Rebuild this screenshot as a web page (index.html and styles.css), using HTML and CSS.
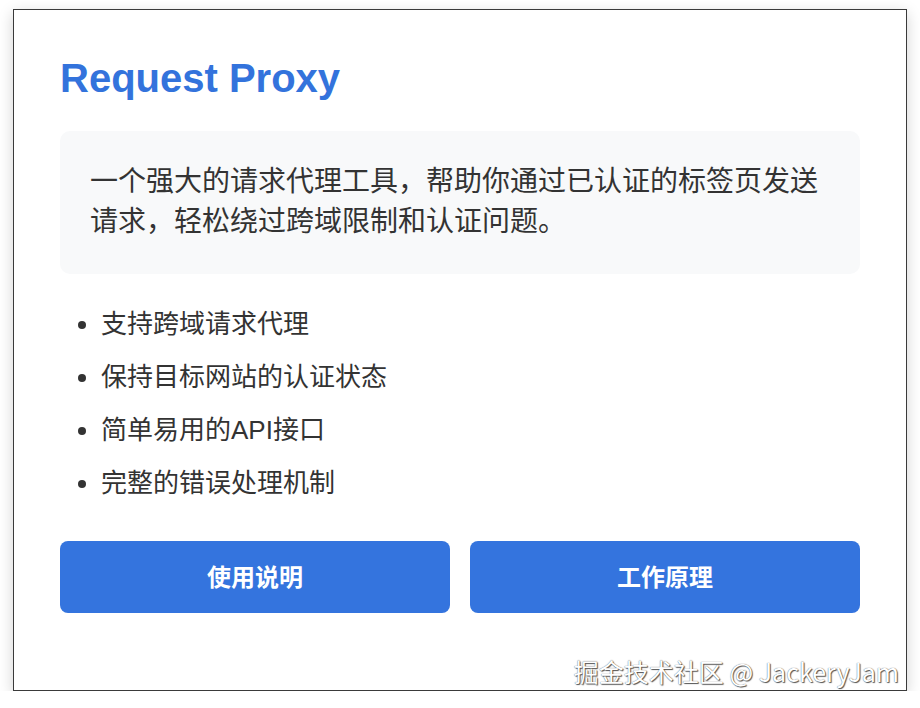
FILE: index.html
```html
<!DOCTYPE html>
<html lang="zh">
<head>
<meta charset="utf-8">
<title>Request Proxy</title>
<link rel="stylesheet" href="styles.css">
</head>
<body>
<div class="window">
  <h1 class="title">Request Proxy</h1>
  <div class="intro">一个强大的请求代理工具，帮助你通过已认证的标签页发送请求，轻松绕过跨域限制和认证问题。</div>
  <ul class="features">
    <li>支持跨域请求代理</li>
    <li>保持目标网站的认证状态</li>
    <li>简单易用的API接口</li>
    <li>完整的错误处理机制</li>
  </ul>
  <div class="actions">
    <button class="btn">使用说明</button>
    <button class="btn">工作原理</button>
  </div>
  <div class="watermark">掘金技术社区 @ JackeryJam</div>
</div>
</body>
</html>
```
FILE: styles.css
```css
html, body {
  margin: 0;
  padding: 0;
  background: #fff;
}
body {
  padding: 9px 0 0 13px;
  font-family: "Liberation Sans", "Noto Sans CJK SC", sans-serif;
  color: #333;
}
.window {
  position: relative;
  box-sizing: border-box;
  width: 894px;
  height: 682px;
  border: 1px solid #3a3a3a;
  background: #fff;
  box-shadow: 0 4px 14px rgba(0, 0, 0, 0.18);
  padding: 44px 46px 0 46px;
}
.title {
  margin: 0;
  font-size: 40px;
  line-height: 48px;
  font-weight: bold;
  color: #3373dc;
}
.intro {
  margin-top: 29px;
  background: #f8f9fa;
  border-radius: 10px;
  padding: 31px 30px 32px 30px;
  font-size: 28px;
  line-height: 40px;
  color: #333;
}
.features {
  margin: 30px 0 0 0;
  padding: 0 0 0 41px;
  display: flex;
  flex-direction: column;
  gap: 13px;
  font-size: 26px;
  line-height: 40px;
  color: #333;
}
.actions {
  margin-top: 38px;
  display: flex;
  gap: 20px;
}
.btn {
  flex: 1;
  height: 72px;
  border: none;
  border-radius: 8px;
  background: #3474de;
  color: #fff;
  font-family: "Liberation Sans", "Noto Sans CJK SC", sans-serif;
  font-size: 24px;
  font-weight: bold;
  padding: 0 0 3px 0;
}
.watermark {
  position: absolute;
  right: 7px;
  bottom: 3px;
  font-size: 25px;
  line-height: 32px;
  color: #fff;
  font-family: "Noto Sans CJK SC", sans-serif;
  text-shadow: 0 0 1px #444, 1px 1px 1px #555;
}
```
